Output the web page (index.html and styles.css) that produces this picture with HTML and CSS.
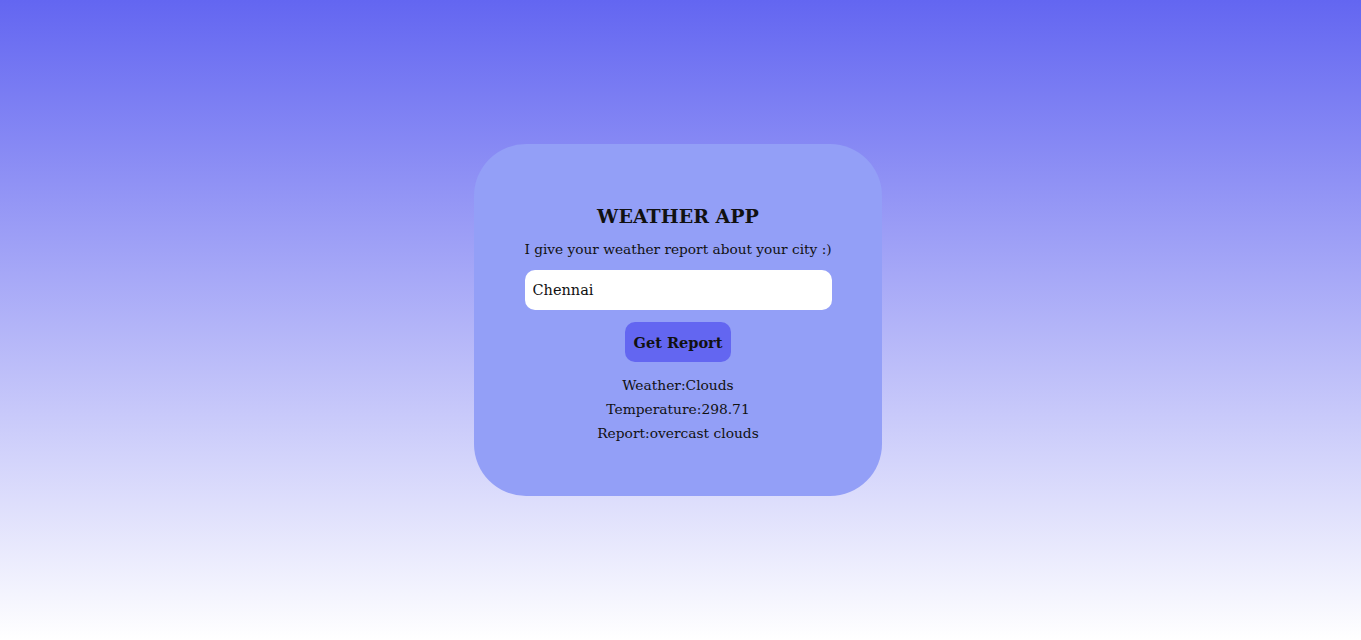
FILE: index.html
```html
<!DOCTYPE html>
<html>
<head>
<meta charset="utf-8">
<title>Weather App</title>
<link rel="stylesheet" href="styles.css">
</head>
<body>
<main class="page">
  <section class="card">
    <h1 class="title">WEATHER APP</h1>
    <p class="subtitle">I give your weather report about your city :)</p>
    <input class="city" type="text" value="Chennai">
    <button class="btn">Get Report</button>
    <div class="results">
      <p class="line">Weather:Clouds</p>
      <p class="line">Temperature:298.71</p>
      <p class="line">Report:overcast clouds</p>
    </div>
  </section>
</main>
</body>
</html>
```
FILE: styles.css
```css
html, body {
  margin: 0;
  padding: 0;
}
body {
  font-family: Georgia, "DejaVu Serif", serif;
  color: #111;
  background: linear-gradient(to bottom, #6366f1 0%, #ffffff 100%);
  min-height: 100vh;
}
.page {
  height: 640px;
  display: flex;
  align-items: center;
  justify-content: center;
}
.card {
  width: 408px;
  height: 352px;
  box-sizing: border-box;
  margin-left: -5px;
  padding-top: 60px;
  background: #939ff7;
  border-radius: 52px;
  display: flex;
  flex-direction: column;
  align-items: center;
}
.title {
  margin: 0;
  font-size: 19px;
  line-height: 24px;
  font-weight: bold;
}
.subtitle {
  margin: 11px 0 0;
  font-size: 13.7px;
  line-height: 20px;
}
.city {
  margin-top: 11px;
  width: 307px;
  height: 40px;
  box-sizing: border-box;
  border: none;
  border-radius: 10px;
  background: #fff;
  padding: 0 8px;
  font-family: inherit;
  font-size: 14.5px;
  color: #111;
  outline: none;
}
.btn {
  margin-top: 12px;
  width: 106px;
  height: 40px;
  border: none;
  border-radius: 10px;
  background: #6366f1;
  font-family: inherit;
  font-weight: bold;
  font-size: 14.5px;
  color: #111;
  padding: 0;
}
.results {
  margin-top: 11px;
  display: flex;
  flex-direction: column;
  align-items: center;
}
.line {
  margin: 0;
  font-size: 13.8px;
  line-height: 24px;
}
```
